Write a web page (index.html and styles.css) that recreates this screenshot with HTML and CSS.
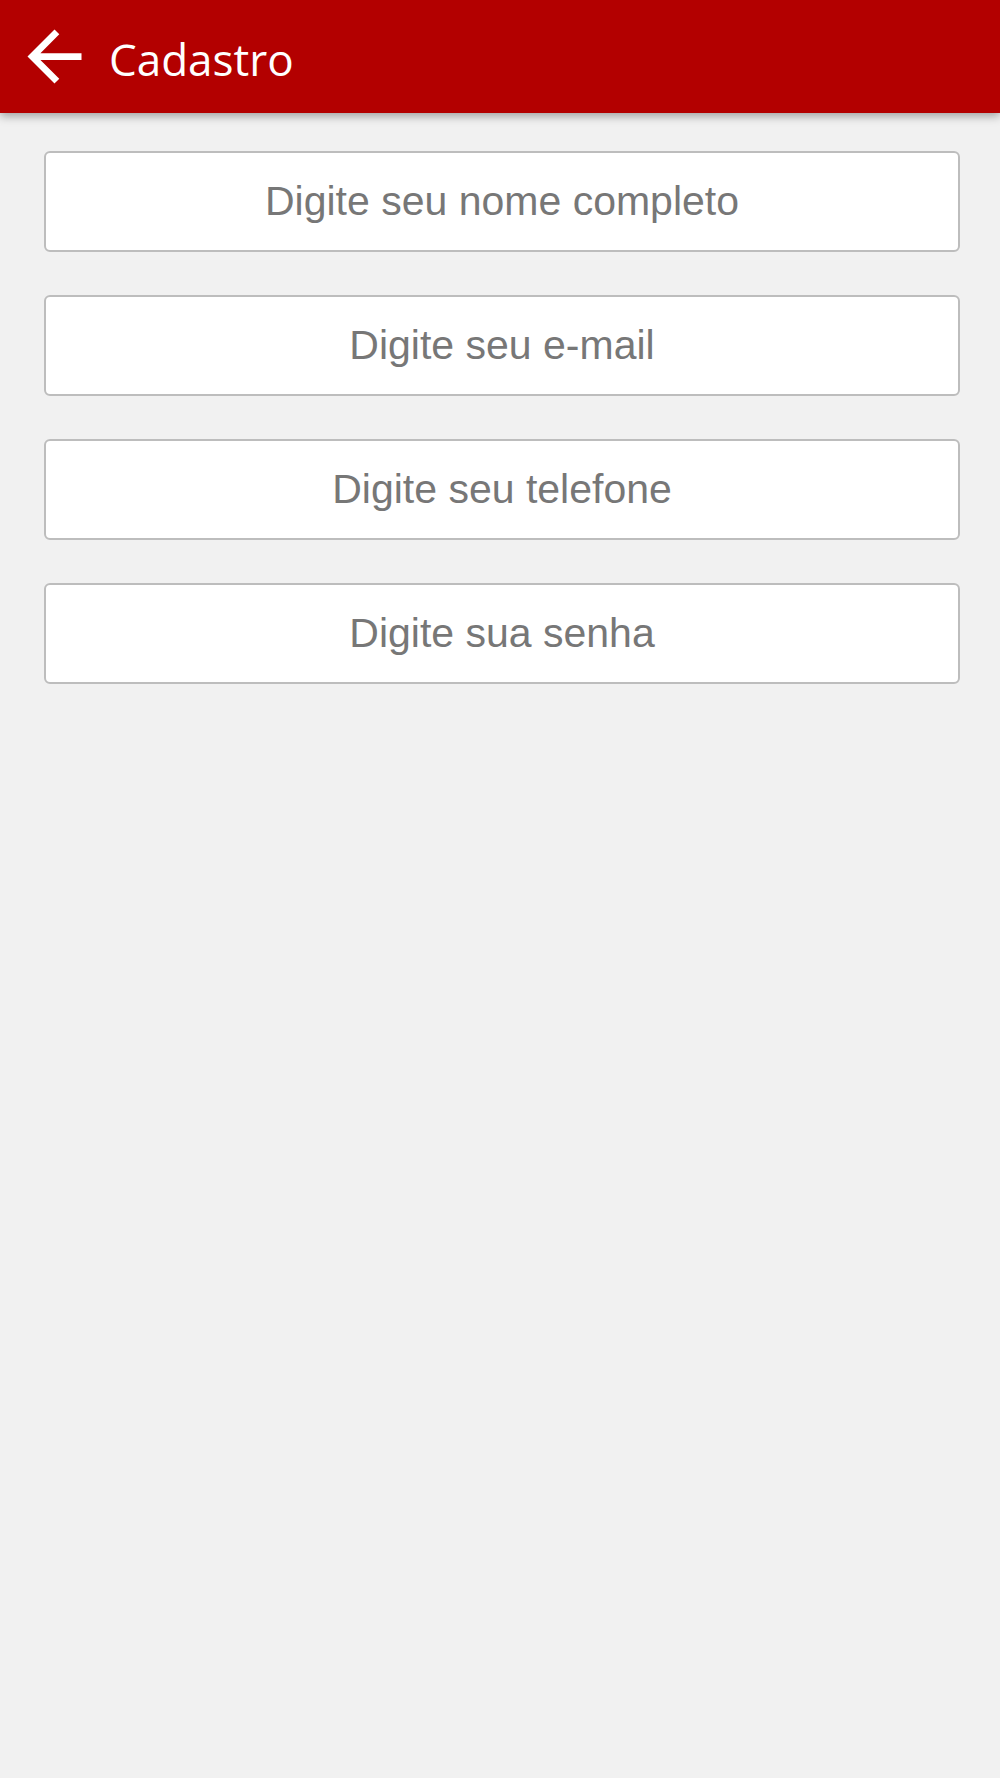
FILE: index.html
```html
<!DOCTYPE html>
<html lang="pt-BR">

<head>
    <meta charset="UTF-8">
    <meta name="viewport" content="width=device-width, initial-scale=1.0">
    <title>Cadastro</title>
    <link rel="stylesheet" href="styles.css">
</head>

<body>
    <header class="toolbar">
        <button class="back-btn" aria-label="Voltar">
            <svg viewBox="0 0 24 24" width="81" height="81">
                <path fill="#fff" d="M20 11H7.83l5.59-5.59L12 4l-8 8 8 8 1.41-1.41L7.83 13H20v-2z" />
            </svg>
        </button>
        <h1 class="toolbar-title">Cadastro</h1>
    </header>

    <form class="signup-form">
        <input class="field" type="text" placeholder="Digite seu nome completo">
        <input class="field" type="email" placeholder="Digite seu e-mail">
        <input class="field" type="tel" placeholder="Digite seu telefone">
        <input class="field" type="password" placeholder="Digite sua senha">
    </form>
</body>

</html>
```

FILE: styles.css
```css
body {
    margin: 0;
    background-color: #f1f1f1;
    font-family: "Liberation Sans", Arial, sans-serif;
}

/* Top bar */
.toolbar {
    display: flex;
    align-items: center;
    height: 113px;
    padding-left: 14px;
    background-color: #b30000;
    box-shadow: 0 3px 9px rgba(0, 0, 0, 0.35);
    position: relative;
}

.back-btn {
    display: flex;
    padding: 0;
    margin: 0;
    border: none;
    background: transparent;
    cursor: pointer;
}

.toolbar-title {
    margin: 0 0 0 14px;
    padding-top: 5px;
    font-family: "Open Sans", "Noto Sans", sans-serif;
    font-size: 44px;
    font-weight: normal;
    color: #fff;
}

/* Form */
.signup-form {
    display: flex;
    flex-direction: column;
    gap: 43px;
    padding: 38px 40px 0 44px;
}

.field {
    box-sizing: border-box;
    height: 101px;
    width: 100%;
    padding: 0 10px;
    border: 2px solid #bdbdbd;
    border-radius: 6px;
    background-color: #fff;
    font-family: "Liberation Sans", Arial, sans-serif;
    font-size: 41px;
    color: #555;
    text-align: center;
}

.field::placeholder {
    color: #777;
}
```
